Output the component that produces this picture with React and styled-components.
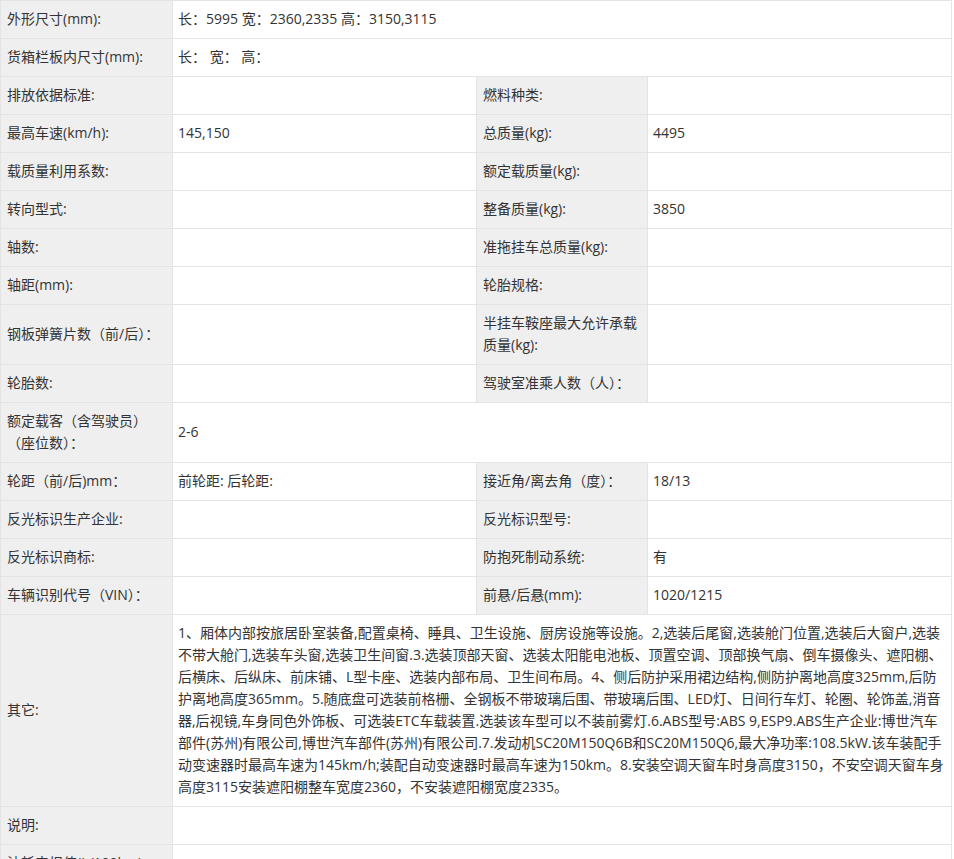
import React from "react";
import styled, { createGlobalStyle } from "styled-components";

const Global = createGlobalStyle`
  body { margin: 0; background: #fff; font-family: "Open Sans", "Noto Sans CJK SC", sans-serif; }
`;

const Table = styled.table`
  width: 951px;
  border-collapse: collapse;
  table-layout: fixed;
  font-size: 14px;
  color: #333;
  line-height: 22px;
`;

const Col = styled.col`
  width: ${(p) => p.$w}px;
`;

const Label = styled.td`
  background: #efefef;
  border: 1px solid #e4e4e4;
  padding: 7px 6px 8px;
  vertical-align: middle;
`;

const Value = styled.td`
  background: #fff;
  border: 1px solid #e4e4e4;
  padding: 7px 5px 8px;
  vertical-align: middle;
`;

const rows = [
  ["外形尺寸(mm):", "长：5995 宽：2360,2335 高：3150,3115"],
  ["货箱栏板内尺寸(mm):", "长：  宽：  高："],
  ["排放依据标准:", "", "燃料种类:", ""],
  ["最高车速(km/h):", "145,150", "总质量(kg):", "4495"],
  ["载质量利用系数:", "", "额定载质量(kg):", ""],
  ["转向型式:", "", "整备质量(kg):", "3850"],
  ["轴数:", "", "准拖挂车总质量(kg):", ""],
  ["轴距(mm):", "", "轮胎规格:", ""],
  ["钢板弹簧片数（前/后）：", "", "半挂车鞍座最大允许承载质量(kg):", ""],
  ["轮胎数:", "", "驾驶室准乘人数（人）：", ""],
  ["额定载客（含驾驶员）（座位数）：", "2-6"],
  ["轮距（前/后)mm：", "前轮距: 后轮距:", "接近角/离去角（度）：", "18/13"],
  ["反光标识生产企业:", "", "反光标识型号:", ""],
  ["反光标识商标:", "", "防抱死制动系统:", "有"],
  ["车辆识别代号（VIN）：", "", "前悬/后悬(mm):", "1020/1215"],
  [
    "其它:",
    "1、厢体内部按旅居卧室装备,配置桌椅、睡具、卫生设施、厨房设施等设施。2,选装后尾窗,选装舱门位置,选装后大窗户,选装不带大舱门,选装车头窗,选装卫生间窗.3.选装顶部天窗、选装太阳能电池板、顶置空调、顶部换气扇、倒车摄像头、遮阳棚、后横床、后纵床、前床铺、L型卡座、选装内部布局、卫生间布局。4、侧后防护采用裙边结构,侧防护离地高度325mm,后防护离地高度365mm。5.随底盘可选装前格栅、全钢板不带玻璃后围、带玻璃后围、LED灯、日间行车灯、轮圈、轮饰盖,消音器,后视镜,车身同色外饰板、可选装ETC车载装置.选装该车型可以不装前雾灯.6.ABS型号:ABS 9,ESP9.ABS生产企业:博世汽车部件(苏州)有限公司,博世汽车部件(苏州)有限公司.7.发动机SC20M150Q6B和SC20M150Q6,最大净功率:108.5kW.该车装配手动变速器时最高车速为145km/h;装配自动变速器时最高车速为150km。8.安装空调天窗车时身高度3150，不安空调天窗车身高度3115安装遮阳棚整车宽度2360，不安装遮阳棚宽度2335。",
  ],
  ["说明:", ""],
  ["油耗申报值(L/100km):", ""],
];

export default function App() {
  return (
    <>
      <Global />
      <Table>
        <colgroup>
          <Col $w={172} />
          <Col $w={304} />
          <Col $w={171} />
          <Col $w={304} />
        </colgroup>
        <tbody>
          {rows.map((r, i) => (
            <tr key={i}>
              <Label>{r[0]}</Label>
              {r.length === 2 ? (
                <Value colSpan={3}>{r[1]}</Value>
              ) : (
                <>
                  <Value>{r[1]}</Value>
                  <Label>{r[2]}</Label>
                  <Value>{r[3]}</Value>
                </>
              )}
            </tr>
          ))}
        </tbody>
      </Table>
    </>
  );
}
